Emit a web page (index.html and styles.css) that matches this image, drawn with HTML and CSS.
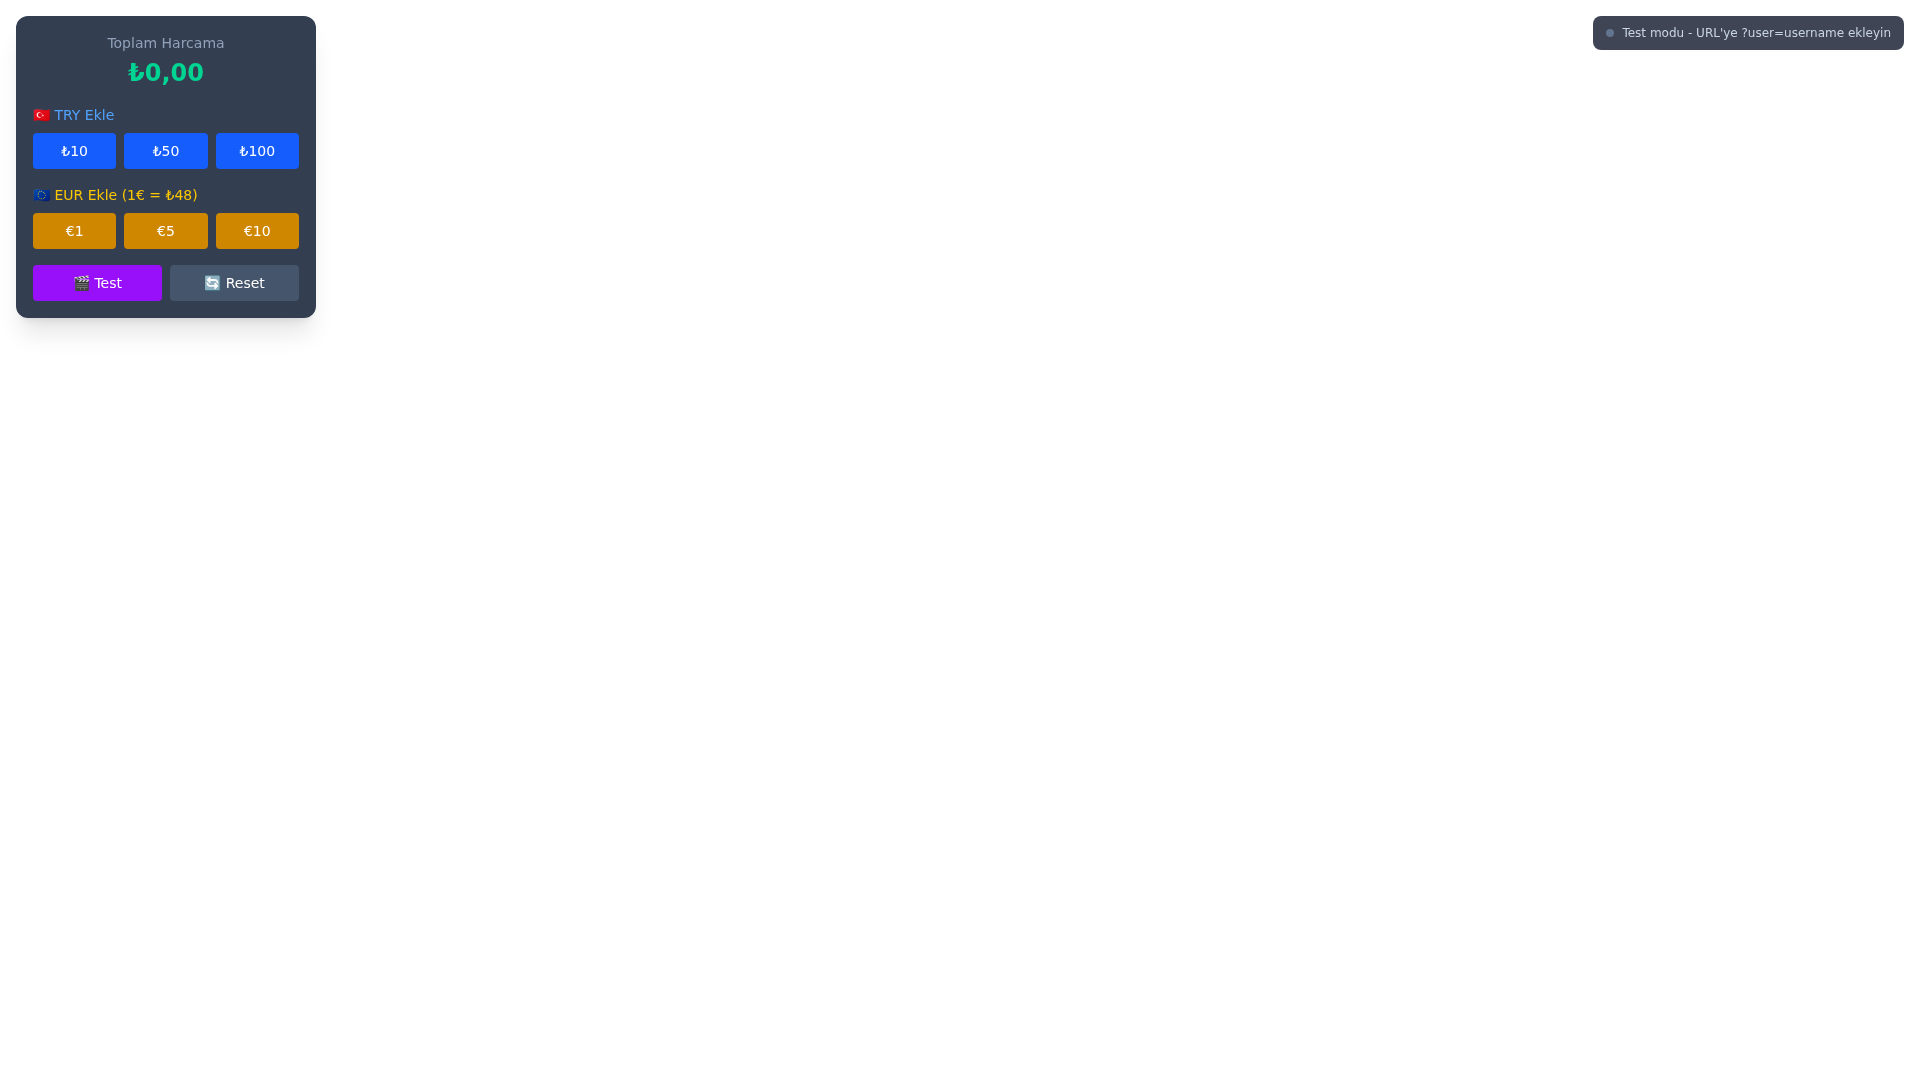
FILE: index.html
```html
<!DOCTYPE html>
<html lang="en">
	<head>
		<meta charset="UTF-8">
		<title>Harcama</title>
		<link rel="stylesheet" href="styles.css">
	</head>
	<body>
		<div class="panel">
			<div class="total">
				<p class="totalLabel">Toplam Harcama</p>
				<p class="totalValue">₺0,00</p>
			</div>
			<div class="group">
				<p class="groupLabel tryLabel">🇹🇷 TRY Ekle</p>
				<div class="amounts">
					<button class="btn tryBtn">₺10</button>
					<button class="btn tryBtn">₺50</button>
					<button class="btn tryBtn">₺100</button>
				</div>
			</div>
			<div class="group">
				<p class="groupLabel eurLabel">🇪🇺 EUR Ekle (1€ = ₺48)</p>
				<div class="amounts">
					<button class="btn eurBtn">€1</button>
					<button class="btn eurBtn">€5</button>
					<button class="btn eurBtn">€10</button>
				</div>
			</div>
			<div class="actions">
				<button class="btn testBtn">🎬 Test</button>
				<button class="btn resetBtn">🔄 Reset</button>
			</div>
		</div>
		<div class="status">
			<span class="dot"></span>
			<span>Test modu - URL'ye ?user=username ekleyin</span>
		</div>
	</body>
</html>
```

FILE: styles.css
```css
html {
	font-family: "DejaVu Sans", sans-serif;
}

body {
	margin: 0;
	background-color: white;
}

p {
	margin: 0;
}

.panel {
	position: fixed;
	top: 16px;
	left: 16px;
	box-sizing: border-box;
	width: 300px;
	padding: 16px;
	border: 1px solid transparent;
	border-radius: 12px;
	background-color: rgba(29, 41, 61, 0.9);
	box-shadow: 0 20px 25px -5px rgba(0, 0, 0, 0.1), 0 8px 10px -6px rgba(0, 0, 0, 0.1);
	backdrop-filter: blur(8px);
	color: white;
}

.total {
	margin-bottom: 16px;
	text-align: center;
}

.totalLabel {
	margin-bottom: 4px;
	font-size: 14px;
	line-height: 20px;
	color: #90a1b9;
}

.totalValue {
	font-size: 24px;
	line-height: 32px;
	font-weight: 700;
	color: #00d492;
}

.group {
	margin-bottom: 16px;
}

.groupLabel {
	margin-bottom: 8px;
	font-size: 14px;
	line-height: 20px;
}

.tryLabel {
	color: #51a2ff;
}

.eurLabel {
	color: #fdc700;
}

.amounts {
	display: grid;
	grid-template-columns: repeat(3, 1fr);
	gap: 8px;
}

.actions {
	display: grid;
	grid-template-columns: repeat(2, 1fr);
	gap: 8px;
}

.btn {
	height: 36px;
	padding: 8px;
	border: none;
	border-radius: 4px;
	font-family: inherit;
	font-size: 14px;
	line-height: 20px;
	color: white;
}

.tryBtn {
	background-color: #155dfc;
}

.eurBtn {
	background-color: #d08700;
}

.testBtn {
	background-color: #9810fa;
}

.resetBtn {
	background-color: #45556c;
}

.status {
	position: fixed;
	top: 16px;
	right: 16px;
	display: flex;
	align-items: center;
	gap: 8px;
	padding: 8px 12px;
	border: 1px solid transparent;
	border-radius: 8px;
	background-color: rgba(15, 23, 43, 0.8);
	backdrop-filter: blur(8px);
	font-size: 12px;
	line-height: 16px;
	color: #cad5e2;
}

.dot {
	width: 8px;
	height: 8px;
	border-radius: 50%;
	background-color: #62748e;
}
```
